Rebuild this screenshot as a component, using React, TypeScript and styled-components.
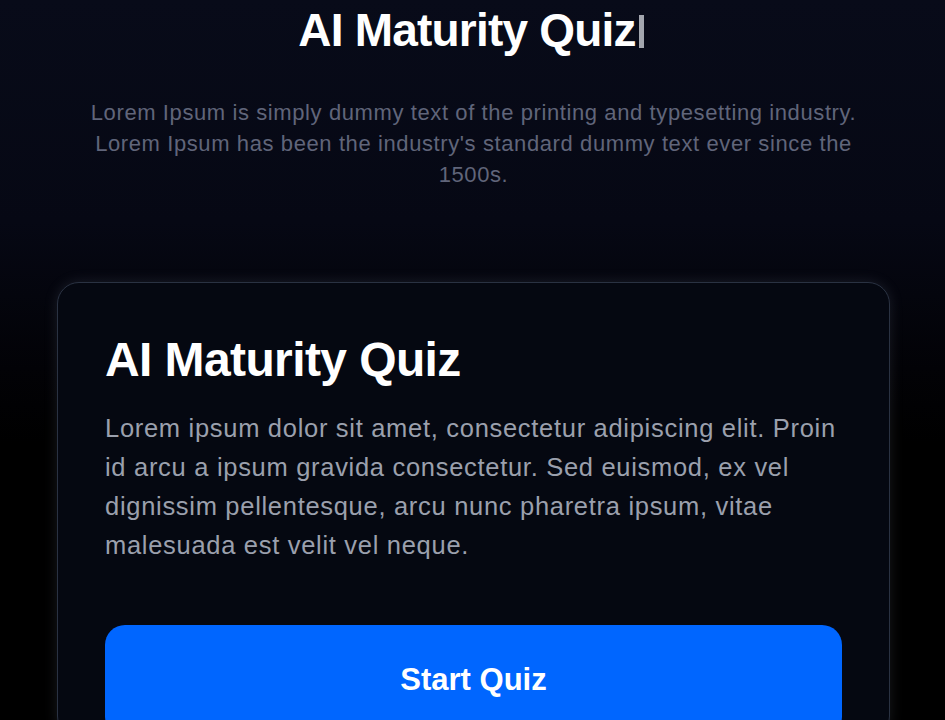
import React from "react";
import styled, { createGlobalStyle } from "styled-components";

const GlobalStyle = createGlobalStyle`
  html, body {
    margin: 0;
    padding: 0;
    background: #000;
  }
  body {
    font-family: "Liberation Sans", Arial, sans-serif;
  }
  * { box-sizing: border-box; }
`;

const Page = styled.div`
  min-height: 720px;
  background: linear-gradient(180deg, #080b19 0%, #060814 30%, #020206 50%, #000 60%);
  display: flex;
  flex-direction: column;
  align-items: center;
  padding: 3px 55px 0 57px;
  overflow: hidden;
`;

const Hero = styled.header`
  display: flex;
  flex-direction: column;
  align-items: center;
  text-align: center;
`;

const HeroTitle = styled.h1`
  margin: 0 5px 0 0;
  font-family: "Liberation Sans", Arial, sans-serif;
  font-weight: 700;
  font-size: 46px;
  line-height: 55px;
  letter-spacing: -0.8px;
  color: #ffffff;
  display: flex;
  align-items: center;
`;

const Cursor = styled.span`
  display: inline-block;
  width: 5px;
  height: 33px;
  margin-left: 3px;
  margin-top: 2px;
  background: #a3a6ae;
`;

const HeroText = styled.p`
  margin: 39px 0 0;
  max-width: 790px;
  font-family: "Liberation Sans", Arial, sans-serif;
  font-weight: 400;
  font-size: 22px;
  line-height: 31px;
  letter-spacing: 0.6px;
  color: #60657a;
`;

const Card = styled.section`
  margin-top: 92px;
  width: 833px;
  background: #050811;
  border: 1px solid #2a3242;
  border-radius: 22px;
  box-shadow: 0 0 14px rgba(150, 160, 180, 0.16);
  padding: 48px 47px 0;
  display: flex;
  flex-direction: column;
`;

const CardTitle = styled.h2`
  margin: 0;
  font-family: "Liberation Sans", Arial, sans-serif;
  font-weight: 700;
  font-size: 48px;
  line-height: 58px;
  letter-spacing: -0.6px;
  color: #ffffff;
`;

const CardText = styled.p`
  margin: 20px 0 0;
  font-family: "Liberation Sans", Arial, sans-serif;
  font-size: 25.5px;
  line-height: 39px;
  letter-spacing: 0.7px;
  color: #9ba0ad;
`;

const StartButton = styled.button`
  margin-top: 60px;
  width: 100%;
  height: 112px;
  border: none;
  border-radius: 20px;
  background: #0066ff;
  color: #ffffff;
  font-family: "Liberation Sans", Arial, sans-serif;
  font-weight: 700;
  font-size: 31px;
  cursor: pointer;
  padding: 0 0 2px;
`;

export default function App() {
  return (
    <>
      <GlobalStyle />
      <Page>
        <Hero>
          <HeroTitle>
            AI Maturity Quiz
            <Cursor />
          </HeroTitle>
          <HeroText>
            Lorem Ipsum is simply dummy text of the printing and typesetting industry.
            Lorem Ipsum has been the industry's standard dummy text ever since the 1500s.
          </HeroText>
        </Hero>
        <Card>
          <CardTitle>AI Maturity Quiz</CardTitle>
          <CardText>
            Lorem ipsum dolor sit amet, consectetur adipiscing elit. Proin id arcu a ipsum
            gravida consectetur. Sed euismod, ex vel dignissim pellentesque, arcu nunc
            pharetra ipsum, vitae malesuada est velit vel neque.
          </CardText>
          <StartButton>Start Quiz</StartButton>
        </Card>
      </Page>
    </>
  );
}
